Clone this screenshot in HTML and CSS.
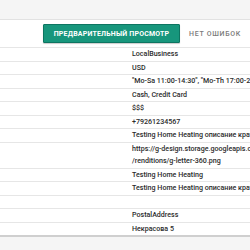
FILE: index.html
```html
<!DOCTYPE html>
<html lang="ru">
<head>
    <meta charset="UTF-8">
    <meta name="viewport" content="width=device-width, initial-scale=1.0">
    <title>Микроразметка</title>
    <link rel="stylesheet" href="styles.css">
</head>
<body>

    <div class="topbar"></div>

    <div class="toolbar">
        <button class="btn-preview">Предварительный просмотр</button>
        <span class="status">Нет ошибок</span>
    </div>

    <div class="props">
        <div class="row"><div class="key"></div><div class="val">LocalBusiness</div></div>
        <div class="row"><div class="key"></div><div class="val">USD</div></div>
        <div class="row"><div class="key"></div><div class="val">"Mo-Sa 11:00-14:30", "Mo-Th 17:00-21:30", "Fr-Sa 17:00-22:00"</div></div>
        <div class="row"><div class="key"></div><div class="val">Cash, Credit Card</div></div>
        <div class="row"><div class="key"></div><div class="val">$$$</div></div>
        <div class="row"><div class="key"></div><div class="val">+79261234567</div></div>
        <div class="row"><div class="key"></div><div class="val">Testing Home Heating описание краткое</div></div>
        <div class="row"><div class="key"></div><div class="val">https://g-design.storage.googleapis.com<br>/renditions/g-letter-360.png</div></div>
        <div class="row"><div class="key"></div><div class="val">Testing Home Heating</div></div>
        <div class="row"><div class="key"></div><div class="val">Testing Home Heating описание краткое</div></div>
        <div class="row"><div class="key"></div><div class="val"></div></div>
        <div class="row"><div class="key"></div><div class="val">PostalAddress</div></div>
        <div class="row"><div class="key"></div><div class="val">Некрасова 5</div></div>
    </div>

    <div class="footer"></div>

</body>
</html>
```

FILE: styles.css
```css
body {
    margin: 0;
    width: 250px;
    height: 250px;
    overflow: hidden;
    font-family: Roboto, "Liberation Sans", sans-serif;
    background-color: #fff;
    color: #2b2b2b;
}

.topbar {
    height: 19px;
    background-color: #f5f5f5;
    border-bottom: 1px solid #e2e2e2;
}

.toolbar {
    height: 27px;
    display: flex;
    justify-content: flex-end;
    align-items: center;
    gap: 9px;
    padding: 0 9px 0 0;
}

.btn-preview {
    width: 137px;
    height: 19px;
    padding: 0;
    background-color: #17967c;
    border: 1px solid #0d7561;
    border-radius: 1px;
    color: #fff;
    font-family: inherit;
    font-size: 7px;
    font-weight: 700;
    letter-spacing: 0.2px;
    text-transform: uppercase;
    box-shadow: 0 1px 1px rgba(0, 0, 0, 0.2);
}

.status {
    color: #7a7a7a;
    font-size: 7px;
    font-weight: 500;
    letter-spacing: 0.7px;
    text-transform: uppercase;
}

.props {
    border-top: 1px solid #e6e6e6;
}

.row {
    display: grid;
    grid-template-columns: 132px 300px;
    border-bottom: 1px solid #e6e6e6;
}

.row:last-child {
    border-bottom: none;
}

.val {
    font-size: 7.1px;
    font-weight: 500;
    line-height: 12.5px;
    min-height: 12.5px;
    white-space: nowrap;
}

.footer {
    border-top: 2px solid #cfcfcf;
    height: 20px;
    background-color: #f5f5f5;
}
```
